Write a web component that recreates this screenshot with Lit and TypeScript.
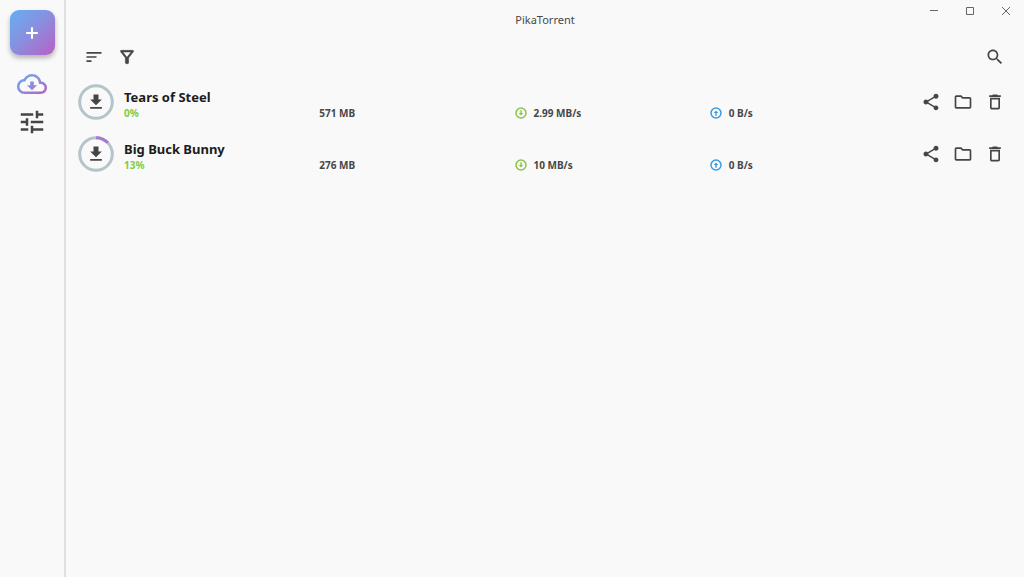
import { LitElement, css, html, svg } from "lit";
import { customElement, property, state } from "lit/decorators.js";

interface Torrent {
  name: string;
  progress: number;
  size: string;
  down: string;
  up: string;
}

const icons = {
  sort: "M3 18h6v-2H3v2zM3 6v2h18V6H3zm0 7h12v-2H3v2z",
  filter:
    "M7 6h10l-5.01 6.3L7 6zm-2.75-.39C6.27 8.2 10 13 10 13v6c0 .55.45 1 1 1h2c.55 0 1-.45 1-1v-6s3.72-4.8 5.74-7.39c.51-.66.04-1.61-.79-1.61H5.04c-.83 0-1.3.95-.79 1.61z",
  search:
    "M15.5 14h-.79l-.28-.27C15.41 12.59 16 11.11 16 9.5 16 5.91 13.09 3 9.5 3S3 5.91 3 9.5 5.91 16 9.5 16c1.61 0 3.09-.59 4.23-1.57l.27.28v.79l5 4.99L20.49 19l-4.99-5zm-6 0C7.01 14 5 11.99 5 9.5S7.01 5 9.5 5 14 7.01 14 9.5 11.99 14 9.5 14z",
  share:
    "M18 16.08c-.76 0-1.44.3-1.96.77L8.91 12.7c.05-.23.09-.46.09-.7s-.04-.47-.09-.7l7.05-4.11c.54.5 1.25.81 2.04.81 1.66 0 3-1.34 3-3s-1.34-3-3-3-3 1.34-3 3c0 .24.04.47.09.7L8.04 9.81C7.5 9.31 6.79 9 6 9c-1.66 0-3 1.34-3 3s1.34 3 3 3c.79 0 1.5-.31 2.04-.81l7.12 4.16c-.05.21-.08.43-.08.65 0 1.61 1.31 2.92 2.92 2.92s2.92-1.31 2.92-2.92-1.31-2.92-2.92-2.92z",
  folder:
    "M9.17 6l2 2H20v10H4V6h5.17M10 4H4c-1.1 0-1.99.9-1.99 2L2 18c0 1.1.9 2 2 2h16c1.1 0 2-.9 2-2V8c0-1.1-.9-2-2-2h-8l-2-2z",
  trash:
    "M6 19c0 1.1.9 2 2 2h8c1.1 0 2-.9 2-2V7H6v12zM8 9h8v10H8V9zm7.5-5l-1-1h-5l-1 1H5v2h14V4z",
  tune: "M3 17v2h6v-2H3zM3 5v2h10V5H3zm10 16v-2h8v-2h-8v-2h-2v6h2zM7 9v2H3v2h4v2h2V9H7zm14 4v-2H11v2h10zm-6-4h2V7h4V5h-4V3h-2v6z",
  cloud:
    "M19.35 10.04C18.67 6.59 15.64 4 12 4 9.11 4 6.6 5.64 5.35 8.04 2.34 8.36 0 10.91 0 14c0 3.31 2.69 6 6 6h13c2.76 0 5-2.24 5-5 0-2.64-2.05-4.78-4.65-4.96zM19 18H6c-2.21 0-4-1.79-4-4 0-2.05 1.53-3.76 3.56-3.97l1.07-.11.5-.95C8.08 7.14 9.94 6 12 6c2.62 0 4.88 1.86 5.39 4.43l.3 1.5 1.53.11c1.56.1 2.78 1.41 2.78 2.96 0 1.65-1.35 3-3 3zm-5.55-8h-2.9v3H8l4 4 4-4h-2.55z",
  download: "M19 9h-4V3H9v6H5l7 7 7-7zM5 18v2h14v-2H5z",
  add: "M19 13.25h-5.75v5.75h-2.5v-5.75H5v-2.5h5.75V5h2.5v5.75H19z",
};

const icon = (path: string) =>
  html`<svg class="icon" viewBox="0 0 24 24" aria-hidden="true"><path d=${path}></path></svg>`;

const controls = css`
  button {
    display: grid;
    place-items: center;
    width: 32px;
    height: 32px;
    padding: 0;
    border: 0;
    background: none;
    color: #454545;
    cursor: pointer;
  }
  .icon {
    display: block;
    width: 20px;
    height: 20px;
    fill: currentColor;
  }
`;

@customElement("torrent-row")
export class TorrentRow extends LitElement {
  @property({ attribute: false }) torrent!: Torrent;

  static styles = [
    controls,
    css`
      :host {
        display: grid;
        grid-template-columns: 36px minmax(0, 1fr) 96px;
        align-items: center;
        column-gap: 10px;
        height: 52px;
      }
      .ring {
        position: relative;
        width: 36px;
        height: 36px;
        color: #454545;
      }
      .ring .icon {
        position: absolute;
        inset: 8px;
      }
      .dial {
        display: block;
        width: 36px;
        height: 36px;
        fill: none;
        stroke-width: 3;
      }
      .track {
        stroke: #b4c5ca;
      }
      .info {
        padding-top: 4px;
      }
      .name {
        margin: 0;
        font-size: 13px;
        line-height: 18px;
        font-weight: 700;
        color: #1c1c1c;
      }
      .stats {
        display: grid;
        grid-template-columns: repeat(4, minmax(0, 1fr));
        font-size: 10px;
        line-height: 14px;
        font-weight: 700;
        color: #474747;
      }
      .percent {
        color: #83ca3e;
      }
      .rate {
        display: flex;
        align-items: center;
        gap: 7px;
      }
      .badge {
        width: 12px;
        height: 12px;
        fill: none;
        stroke: currentColor;
      }
      .down {
        color: #8bc34a;
      }
      .up {
        color: #3d9be0;
      }
      .actions {
        display: flex;
        justify-content: flex-end;
      }
    `,
  ];

  render() {
    const t = this.torrent;
    return html`
      <div class="ring">
        <svg class="dial" viewBox="0 0 36 36" aria-hidden="true">
          <defs>
            <linearGradient id="arc" x1="0" y1="0" x2="1" y2="1">
              <stop offset="0.4" stop-color="#9a8ade"></stop>
              <stop offset="1" stop-color="#a872d2"></stop>
            </linearGradient>
          </defs>
          <circle class="track" cx="18" cy="18" r="16.3"></circle>
          ${t.progress
            ? svg`<circle cx="18" cy="18" r="16.3" pathLength="100" stroke="url(#arc)"
                stroke-dasharray="${t.progress} 100" transform="rotate(-90 18 18)"></circle>`
            : ""}
        </svg>
        ${icon(icons.download)}
      </div>
      <div class="info">
        <h2 class="name">${t.name}</h2>
        <div class="stats">
          <span class="percent">${t.progress}%</span>
          <span>${t.size}</span>
          <span class="rate">
            <svg class="badge down" viewBox="0 0 12 12" aria-hidden="true">
              <circle cx="6" cy="6" r="5" stroke-width="1.5"></circle>
              <path d="M6 3.2v3" stroke-width="1.4"></path>
              <path d="M3.7 6h4.6L6 8.6z" fill="currentColor" stroke="none"></path>
            </svg>
            ${t.down}
          </span>
          <span class="rate">
            <svg class="badge up" viewBox="0 0 12 12" aria-hidden="true">
              <circle cx="6" cy="6" r="5" stroke-width="1.5"></circle>
              <path d="M6 8.8V5.8" stroke-width="1.4"></path>
              <path d="M3.7 6h4.6L6 3.4z" fill="currentColor" stroke="none"></path>
            </svg>
            ${t.up}
          </span>
        </div>
      </div>
      <div class="actions">
        <button aria-label="Share">${icon(icons.share)}</button>
        <button aria-label="Open folder">${icon(icons.folder)}</button>
        <button aria-label="Delete">${icon(icons.trash)}</button>
      </div>
    `;
  }
}

@customElement("app-root")
export class AppRoot extends LitElement {
  @state() private torrents: Torrent[] = [
    { name: "Tears of Steel", progress: 0, size: "571 MB", down: "2.99 MB/s", up: "0 B/s" },
    { name: "Big Buck Bunny", progress: 13, size: "276 MB", down: "10 MB/s", up: "0 B/s" },
  ];

  static styles = [
    controls,
    css`
      :host {
        display: flex;
        min-height: 100vh;
        background: #f9f9f9;
        font-family: "Noto Sans", "Open Sans", sans-serif;
      }
      .sidebar {
        box-sizing: border-box;
        flex: none;
        display: flex;
        flex-direction: column;
        align-items: center;
        width: 66px;
        padding-top: 10px;
        border-right: 2px solid #e0e0e0;
      }
      .sidebar .add {
        width: 45px;
        height: 45px;
        margin-bottom: 10px;
        border-radius: 9px;
        background: linear-gradient(135deg, #62b0f3 0%, #8b8ddd 50%, #b95fc6 100%);
        box-shadow: 0 3px 5px rgba(0, 0, 0, 0.28);
        color: #fff;
      }
      .sidebar .tab {
        width: 40px;
        height: 38px;
      }
      .sidebar .tab .icon {
        width: 30px;
        height: 30px;
      }
      .cloud {
        fill: url(#brand);
      }
      .main {
        flex: 1;
        min-width: 0;
      }
      .titlebar {
        display: grid;
        grid-template-columns: 1fr auto 1fr;
        height: 40px;
        align-items: center;
      }
      .title {
        grid-column: 2;
        margin: 0;
        font-size: 11px;
        line-height: 16px;
        font-weight: 400;
        color: #484848;
      }
      .window {
        display: flex;
        align-self: start;
        justify-content: flex-end;
      }
      .window button {
        width: 36px;
        height: 22px;
      }
      .glyph {
        width: 10px;
        height: 10px;
        fill: none;
        stroke: #666;
      }
      .toolbar {
        display: flex;
        gap: 1px;
        height: 34px;
        align-items: center;
        padding: 0 13px 2px 12px;
      }
      .search {
        margin-left: auto;
      }
      .filter .icon {
        stroke: currentColor;
        stroke-width: 0.6px;
      }
      .list {
        margin: 0;
        padding: 0 13px 0 12px;
        list-style: none;
      }
    `,
  ];

  render() {
    return html`
      <nav class="sidebar">
        <button class="add" aria-label="Add torrent">${icon(icons.add)}</button>
        <button class="tab" aria-label="Torrents">
          <svg class="icon cloud" viewBox="0 0 24 24" aria-hidden="true">
            <defs>
              <linearGradient id="brand" x1="0" y1="0" x2="1" y2="1">
                <stop offset="0" stop-color="#62b0f3"></stop>
                <stop offset="0.5" stop-color="#8b8ddd"></stop>
                <stop offset="1" stop-color="#b95fc6"></stop>
              </linearGradient>
            </defs>
            <path d=${icons.cloud}></path>
          </svg>
        </button>
        <button class="tab" aria-label="Settings">${icon(icons.tune)}</button>
      </nav>
      <main class="main">
        <header class="titlebar">
          <h1 class="title">PikaTorrent</h1>
          <div class="window">
            <button aria-label="Minimize">
              <svg class="glyph" viewBox="0 0 10 10"><path d="M1 4.5h8"></path></svg>
            </button>
            <button aria-label="Maximize">
              <svg class="glyph" viewBox="0 0 10 10"><path d="M1.5 1.5h7v7h-7z"></path></svg>
            </button>
            <button aria-label="Close">
              <svg class="glyph" viewBox="0 0 10 10"><path d="M1 1l8 8M9 1L1 9"></path></svg>
            </button>
          </div>
        </header>
        <div class="toolbar">
          <button aria-label="Sort">${icon(icons.sort)}</button>
          <button class="filter" aria-label="Filter">${icon(icons.filter)}</button>
          <button class="search" aria-label="Search">${icon(icons.search)}</button>
        </div>
        <ul class="list">
          ${this.torrents.map((t) => html`<li><torrent-row .torrent=${t}></torrent-row></li>`)}
        </ul>
      </main>
    `;
  }
}
